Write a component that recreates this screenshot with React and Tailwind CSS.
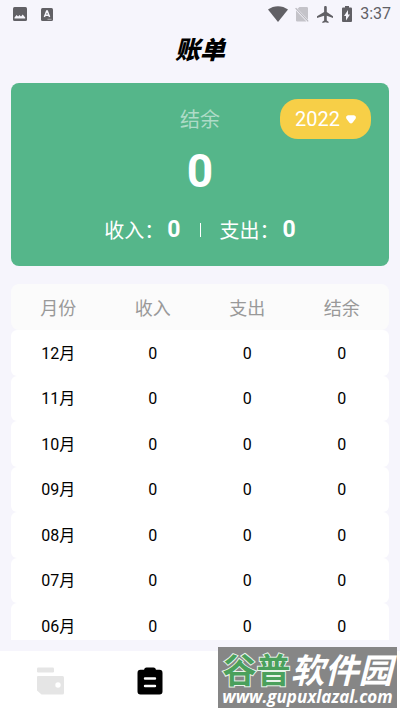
import React, { useState } from "react";

const months = ["12", "11", "10", "09", "08", "07", "06"].map((month) => ({
  month: `${month}月`,
  income: 0,
  expense: 0,
  balance: 0,
}));

const StatusBar = () => (
  <div className="flex items-center h-7 pl-[13px] pr-[9px] text-[#616065]">
    <svg viewBox="0 0 14 14" className="w-[14px] h-[14px]" fill="currentColor">
      <rect width="14" height="14" rx="1.5" />
      <path d="M1.500 11.500V10.500L3.600 8l1.500 1.600L6.500 8l1.500 1.600L9.700 7.400l2.500 3v1.100z" fill="#f6f5fc" />
    </svg>
    <svg viewBox="0 0 12 13" className="ml-[14px] w-3 h-[13px]" fill="currentColor">
      <rect width="12" height="13" rx="1.5" />
      <path d="M3.400 9 5.700 3h.6l2.300 6M4.300 7.200h3.400" fill="none" stroke="#f6f5fc" strokeWidth="1.5" />
      <path d="M6.5 11.3h4" stroke="#b5b4b9" strokeWidth="0.9" />
    </svg>
    <div className="ml-auto flex items-center">
      <svg viewBox="0 0 20 16" className="w-5 h-4" fill="currentColor">
        <path d="M0 3.6C5.8-1 14.2-1 20 3.6L10 16z" />
      </svg>
      <svg viewBox="0 0 14 16" className="ml-[7px] w-[14px] h-4">
        <path d="M1 4.500 11.500 15.500H2.200Q1 15.500 1 14.400zM4.500 1h7.200Q13 1 13 2.200v11.500L2.500 2.800z" fill="#c4c3c9" />
        <path d="M.6 2.200 13.200 15.400" stroke="#b8b7bd" strokeWidth="1.2" />
      </svg>
      <svg viewBox="3 2 18 20" className="ml-2 w-4 h-[17px]" preserveAspectRatio="none" fill="currentColor">
        <path d="M21 16v-2l-7-5V3.500c0-.83-.67-1.500-1.500-1.500S11 2.670 11 3.500V9l-8 5v2l8-2.500V19l-2 1.500V22l3.500-1 3.500 1v-1.500L14 19v-5.500l7 2.500z" />
      </svg>
      <svg viewBox="7 2 10 20" className="ml-[9px] w-[10px] h-4" preserveAspectRatio="none" fill="currentColor">
        <path d="M15.670 4H14V2h-4v2H8.330C7.600 4 7 4.600 7 5.330v15.330C7 21.400 7.600 22 8.330 22h7.330c.74 0 1.340-.6 1.340-1.330V5.330C17 4.600 16.400 4 15.670 4zM11 20v-5.500H9L13 7v5.500h2L11 20z" />
      </svg>
      <span className="ml-2 font-[Roboto,sans-serif] text-[16px] leading-5">3:37</span>
    </div>
  </div>
);

const Summary = ({ year, onYear }) => (
  <section className="relative h-[183px] rounded-lg bg-[#55b68a] text-white flex flex-col items-center">
    <h2 className="mt-[24px] text-[20px] leading-6 text-[#aedbc7]">结余</h2>
    <p className="mt-4 font-[Roboto,sans-serif] text-[46px] leading-12 font-bold">0</p>
    <div className="mt-[21px] flex items-center text-[20px] leading-7">
      <span>收入：</span>
      <b className="ml-[3px] font-[Roboto,sans-serif] text-[23px]">0</b>
      <span className="mx-[19px] w-px h-[14px] bg-white" />
      <span>支出：</span>
      <b className="ml-[3px] font-[Roboto,sans-serif] text-[23px]">0</b>
    </div>
    <button
      onClick={onYear}
      className="absolute top-4 right-[18px] h-10 w-[91px] rounded-[18px] bg-[#f7cf47] flex items-center justify-center gap-[6px] font-[Roboto,sans-serif] text-[20px]"
    >
      {year}
      <svg viewBox="0 0 10 9" className="w-[10px] h-[9px]" fill="currentColor">
        <path d="M2.300.3h5.400C9.500.3 10.600 2.300 9.400 3.900L6.500 7.800Q5 9.400 3.500 7.800L.6 3.900C-.6 2.300.5.3 2.300.3z" />
      </svg>
    </button>
  </section>
);

const BillTable = () => (
  <table className="w-full table-fixed border-separate border-spacing-0 text-center">
    <thead>
      <tr className="h-[46px] text-[18px] text-[#999999]">
        {["月份", "收入", "支出", "结余"].map((name) => (
          <th key={name} className="p-0 font-normal bg-[#fbfbfb] first:rounded-l-lg last:rounded-r-lg">
            {name}
          </th>
        ))}
      </tr>
    </thead>
    <tbody className="font-[Roboto,'Noto_Sans_CJK_SC',sans-serif] text-[16px] text-black">
      {months.map((row) => (
        <tr key={row.month} className="odd:h-[46px] even:h-[45px]">
          {[row.month, row.income, row.expense, row.balance].map((value, i) => (
            <td key={i} className="px-0 pt-px pb-0 bg-white first:rounded-l-md last:rounded-r-md">
              {value}
            </td>
          ))}
        </tr>
      ))}
    </tbody>
  </table>
);

const TabBar = () => (
  <nav className="h-[60px] shrink-0 bg-white grid grid-cols-4 items-center justify-items-center">
    <button aria-label="钱包">
      <svg viewBox="0 0 27 28" className="w-[27px] h-7" fill="#e5e5e5">
        <rect x="0" y="0.5" width="17" height="5" rx="1.2" />
        <path d="M0 10Q0 9 1 9h24.500Q27 9 27 10.500v15.500Q27 27.500 25.500 27.500H4.500L0 23.500z" />
        <circle cx="21" cy="18" r="2.7" fill="#fff" />
      </svg>
    </button>
    <button aria-label="账单">
      <svg viewBox="0 0 26 28" className="w-[26px] h-7">
        <path d="M7 2.800Q7.500.5 9.500.5h7Q18.500.5 19 2.800h3.500Q25.500 2.800 25.500 6v18.500Q25.500 27.500 22.500 27.500h-19Q.5 27.500.5 24.500V6Q.5 2.800 3.500 2.800z" />
        <path d="M8 11.500h10M8 19h10" stroke="#fff" strokeWidth="2.4" strokeLinecap="round" />
      </svg>
    </button>
  </nav>
);

const Watermark = () => (
  <div className="absolute right-[3px] bottom-[3px] w-[179px] h-[61px] flex flex-col items-center bg-[#868686] text-white whitespace-nowrap">
    <p className="flex mt-[3px] text-[34px] leading-[38px]">
      <span className="font-bold text-[#4aa05c] [-webkit-text-stroke:2px_#e8f3ea] [paint-order:stroke]">谷普</span>
      <span className="font-bold italic">软件园</span>
    </p>
    <p className="font-['Open_Sans',sans-serif] text-[17px] leading-[18px] font-bold italic">
      www.gupuxlazal.com
    </p>
  </div>
);

export default function App() {
  const [year, setYear] = useState(2022);

  return (
    <div className="relative h-screen flex flex-col overflow-hidden bg-[#f6f5fc] font-['Noto_Sans_CJK_SC',sans-serif]">
      <StatusBar />
      <h1 className="mt-1 text-center text-[25px] leading-8 font-black italic text-black">账单</h1>
      <main className="mt-[19px] mb-[11px] px-[11px] flex-1 min-h-0 flex flex-col gap-[18px]">
        <Summary year={year} onYear={() => setYear(year - 1)} />
        <div className="flex-1 min-h-0 overflow-hidden">
          <BillTable />
        </div>
      </main>
      <TabBar />
      <Watermark />
    </div>
  );
}
